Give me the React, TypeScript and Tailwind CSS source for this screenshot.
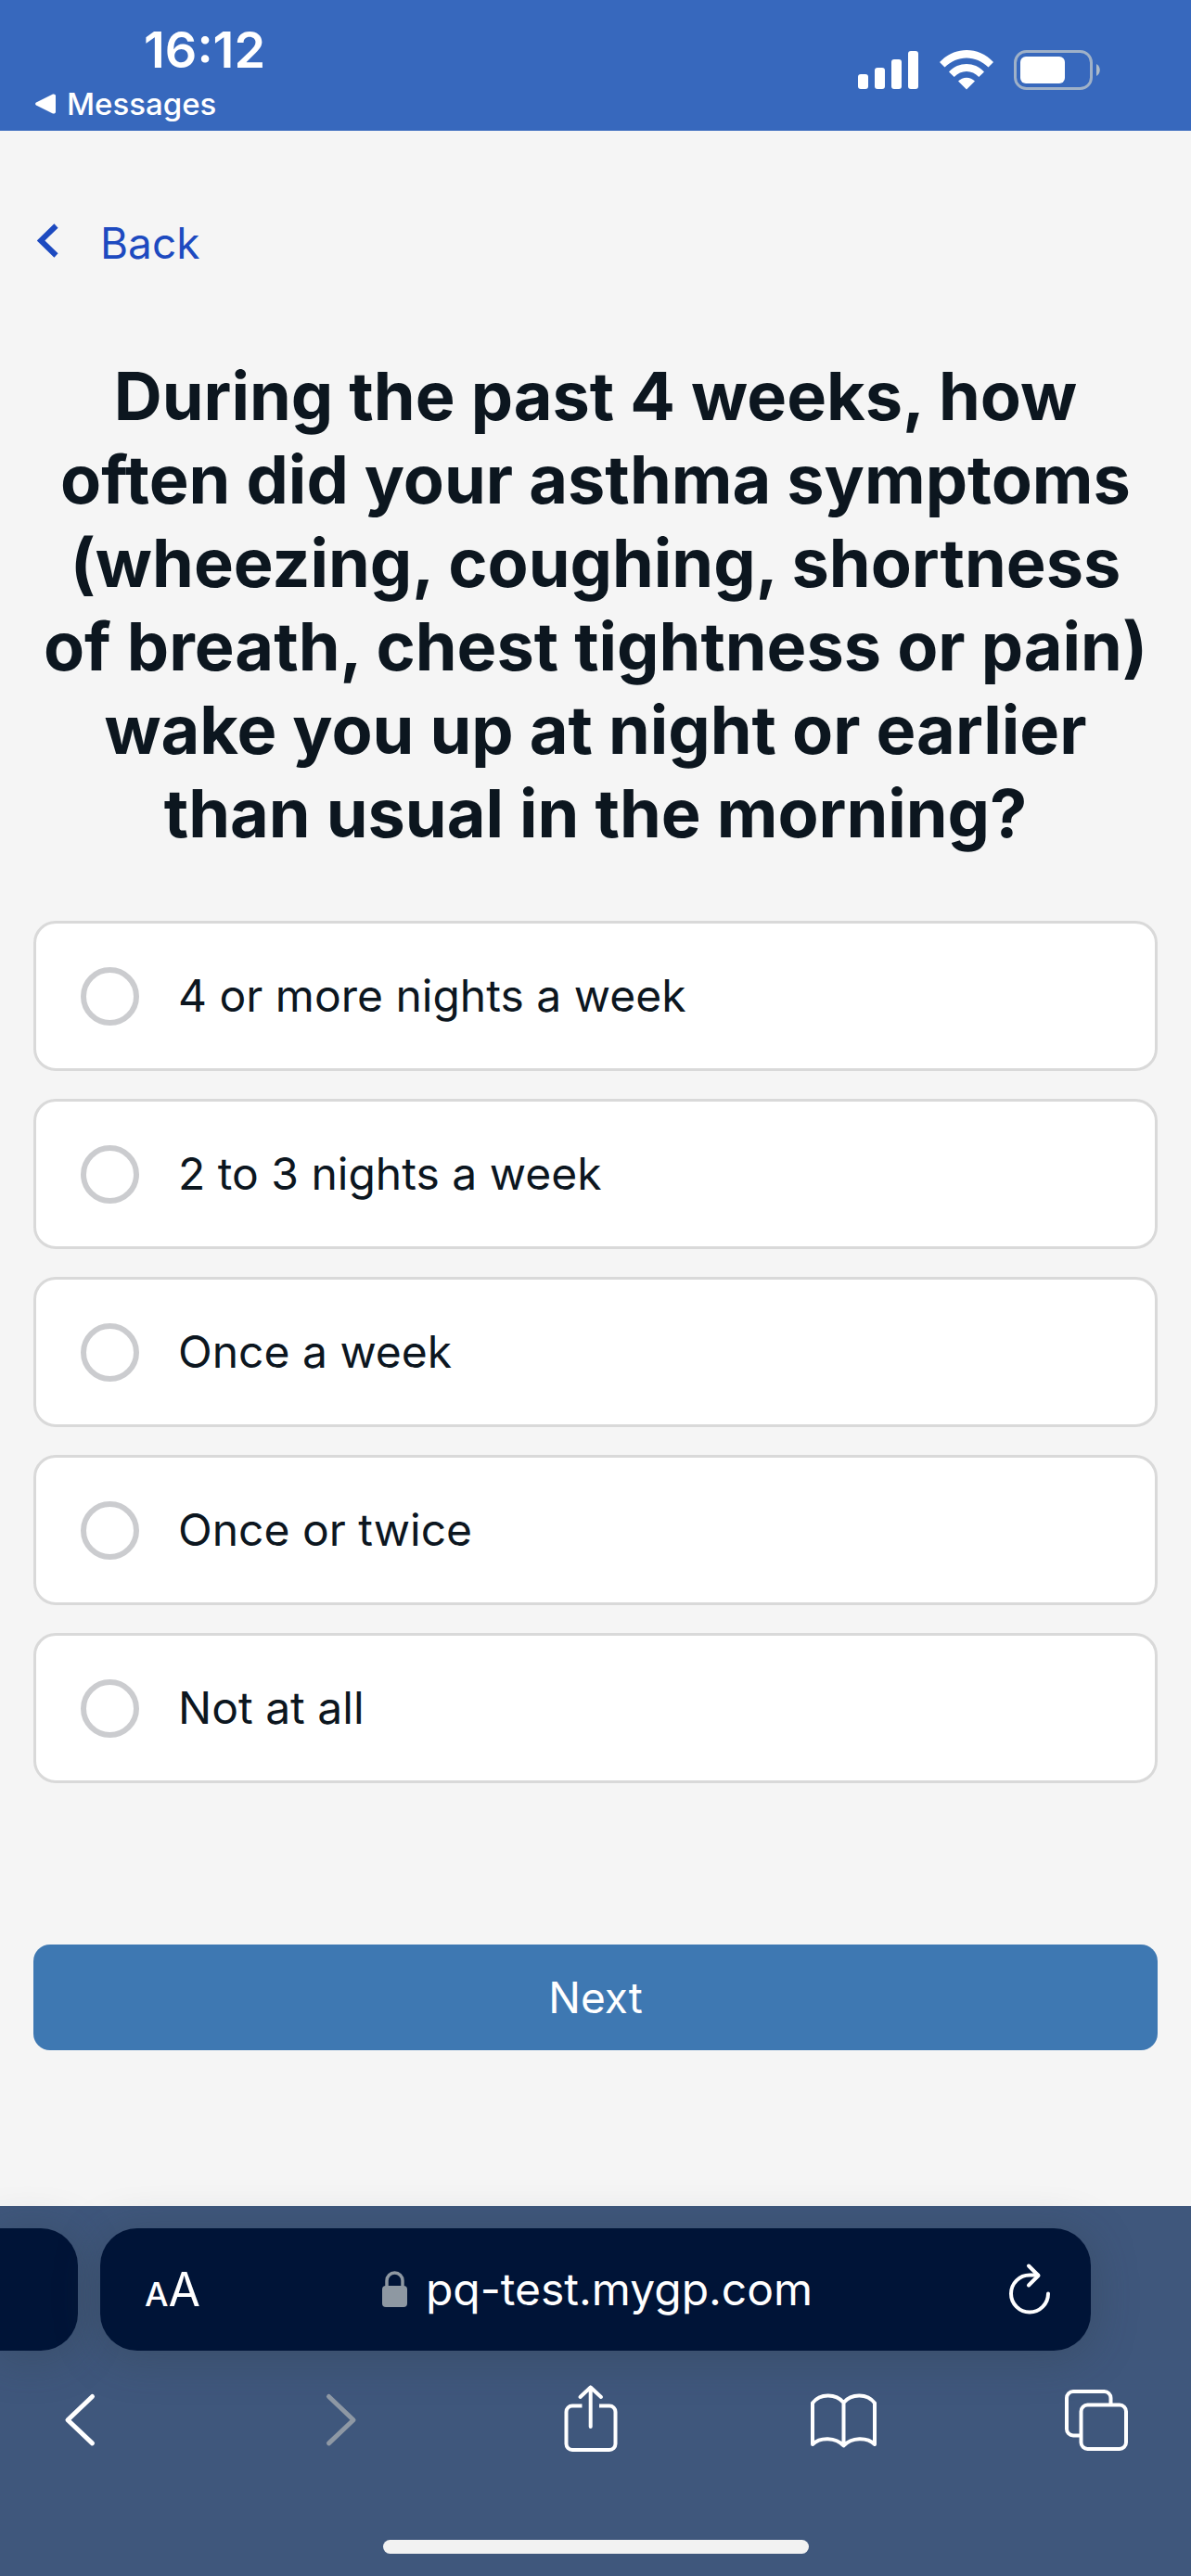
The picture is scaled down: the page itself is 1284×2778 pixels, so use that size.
import { useState } from 'react'

const OPTIONS = [
    '4 or more nights a week',
    '2 to 3 nights a week',
    'Once a week',
    'Once or twice',
    'Not at all',
]

function StatusBar() {
    return (
        <header className="flex justify-between bg-[#3768bd] h-[141px] pl-[38px] pr-[98px] text-white">
            <div className="flex flex-col pt-[26px]">
                <span className="pl-[117px] text-[54px] leading-[56px] font-semibold">16:12</span>
                <a href="#messages" className="flex items-center gap-3 pt-[10px] text-[33px] leading-10 font-medium">
                    <svg width="22" height="22" viewBox="0 0 22 22" fill="currentColor" aria-hidden="true">
                        <path d="M1.500 9.200 19 .6c1.300-.6 3 .3 3 1.600v17.600c0 1.300-1.700 2.200-3 1.600L1.500 12.800C-.3 12-.3 10 1.500 9.200Z" />
                    </svg>
                    Messages
                </a>
            </div>
            <div className="flex items-start pt-[54px]">
                <svg width="66" height="44" viewBox="0 0 66 44" fill="currentColor" aria-hidden="true">
                    <rect x="0" y="26" width="11" height="16" rx="3" />
                    <rect x="18" y="19" width="11" height="23" rx="3" />
                    <rect x="36" y="10" width="11" height="32" rx="3" />
                    <rect x="54" y="1" width="11" height="41" rx="3" />
                </svg>
                <svg className="ml-[22px]" width="58" height="44" viewBox="0 0 58 44" fill="currentColor" aria-hidden="true">
                    <path d="M0 13C16-4.300 42-4.300 58 13l-5.500 5.500C39 5 19 5 5.500 18.500Z" />
                    <path d="M10 23.500c10.500-11.300 27.500-11.300 38 0L42.300 29C35 21 23 21 15.700 29Z" />
                    <path d="M20 33.600c5-5.300 13-5.300 18 0L29 42.500Z" />
                </svg>
                <svg className="ml-[22px]" width="93" height="44" viewBox="0 0 93 44" fill="none" aria-hidden="true">
                    <rect x="1.500" y="1.500" width="82" height="40" rx="12" stroke="#9fb1c8" strokeWidth="3" />
                    <rect x="7" y="7" width="48" height="29" rx="6" fill="#fff" />
                    <path d="M89 15c5 2.500 5 10.500 0 13Z" fill="#adbac8" />
                </svg>
            </div>
        </header>
    )
}

function Toolbar() {
    return (
        <nav className="flex justify-between pt-[33px] pl-[59px] pr-[66px] text-white" aria-label="Browser">
            <button type="button" aria-label="Previous page">
                <svg width="72" height="84" viewBox="0 0 72 84" fill="none" stroke="currentColor" strokeWidth="5" strokeLinecap="round" strokeLinejoin="round">
                    <path d="M40.500 16.500 14 41.700l26.500 25.200" />
                </svg>
            </button>
            <button type="button" aria-label="Next page" disabled className="text-[#8e98a4]">
                <svg width="72" height="84" viewBox="0 0 72 84" fill="none" stroke="currentColor" strokeWidth="5" strokeLinecap="round" strokeLinejoin="round">
                    <path d="M23.500 16.500 50 41.700 23.500 66.900" />
                </svg>
            </button>
            <button type="button" aria-label="Share">
                <svg width="72" height="84" viewBox="0 0 72 84" fill="none" stroke="currentColor" strokeWidth="4" strokeLinejoin="round">
                    <path d="M24.500 26.500H14a6.500 6.500 0 0 0-6.500 6.500v34.500A6.500 6.500 0 0 0 14 74h40a6.500 6.500 0 0 0 6.500-6.500V33a6.500 6.500 0 0 0-6.500-6.500H43" />
                    <path strokeLinecap="round" d="M33.700 49V6.500M22.500 17 33.700 6.500 45 17" />
                </svg>
            </button>
            <button type="button" aria-label="Bookmarks">
                <svg width="72" height="84" viewBox="0 0 72 84" fill="none" stroke="currentColor" strokeWidth="4" strokeLinecap="round" strokeLinejoin="round">
                    <path d="M35.500 23C27 13 10 13 2 23.500V68c8-8 25-8 33.500 1.500C44 60 61 60 69 68V23.500C61 13 44 13 35.500 23ZM35.500 23v46" />
                </svg>
            </button>
            <button type="button" aria-label="Tabs">
                <svg width="72" height="84" viewBox="0 0 72 84" fill="none" stroke="currentColor" strokeWidth="4">
                    <path d="M51.500 25v-7a7 7 0 0 0-7-7H11a7 7 0 0 0-7 7v33.500a7 7 0 0 0 7 7h8" />
                    <rect x="19.500" y="25.500" width="48.500" height="47.500" rx="7" />
                </svg>
            </button>
        </nav>
    )
}

function BrowserBar() {
    return (
        <footer className="mt-auto bg-[#3f577c] pt-6 pb-6">
            <div className="flex gap-6 pr-[108px] text-white">
                <div className="w-[84px] h-[132px] rounded-r-[40px] bg-[#001437] shadow-[0_6px_48px_rgba(48,60,70,0.35)]" />
                <div className="flex-1 h-[132px] grid grid-cols-[1fr_auto_1fr] items-center rounded-[40px] bg-[#001437] pl-[48px] pr-11 shadow-[0_6px_48px_rgba(48,60,70,0.35)]">
                    <button type="button" aria-label="Page settings" className="flex items-baseline justify-self-start pt-1">
                        <span className="text-[36px] leading-[60px] font-medium">A</span>
                        <span className="text-[50px] leading-[60px]">A</span>
                    </button>
                    <div className="flex items-center gap-5">
                        <svg width="27" height="40" viewBox="0 0 27 40" aria-hidden="true">
                            <rect x="0" y="16" width="27" height="23" rx="4" fill="#8e98a2" />
                            <path d="M5 18V10.500a8.500 8.500 0 0 1 17 0V18" fill="none" stroke="#8e98a2" strokeWidth="3.500" />
                        </svg>
                        <span className="text-[48px] leading-[60px]">pq-test.mygp.com</span>
                    </div>
                    <button type="button" aria-label="Reload" className="justify-self-end">
                        <svg width="44" height="60" viewBox="0 0 44 60" fill="none" stroke="currentColor" strokeWidth="4" strokeLinecap="round" strokeLinejoin="round">
                            <path d="M42 34.500a20 20 0 1 1-20-20h9" />
                            <path d="m21 4.500 10.500 10.500L21 25.500" />
                        </svg>
                    </button>
                </div>
            </div>
            <Toolbar />
            <div className="mx-auto mt-[87px] h-[15px] w-[459px] rounded-full bg-[#f2f2f2]" />
        </footer>
    )
}

export default function App() {
    const [answer, setAnswer] = useState('')

    return (
        <div className="min-h-screen flex flex-col bg-[#f5f5f5] font-['Inter',sans-serif] text-[#0c161f]">
            <StatusBar />

            <main className="px-9 pt-[91px]">
                <a href="#back" className="flex w-fit items-center gap-11 pl-1 text-[46px] leading-[60px] text-[#1d4ac0]">
                    <svg width="24" height="42" viewBox="0 0 24 42" fill="none" stroke="currentColor" strokeWidth="6" aria-hidden="true">
                        <path d="M20.500 2.500 4 18.500l16.500 16" />
                    </svg>
                    Back
                </a>

                <form onSubmit={(e) => e.preventDefault()}>
                    <h1 id="question" className="mt-[90px] text-center text-[72px] leading-[90px] font-bold">
                        During the past 4 weeks, how often did your asthma symptoms (wheezing, coughing, shortness of breath, chest tightness or pain) wake you up at night or earlier than usual in the morning?
                    </h1>

                    <div role="radiogroup" aria-labelledby="question" className="mt-[71px] flex flex-col gap-[30px]">
                        {OPTIONS.map((option) => (
                            <label
                                key={option}
                                className="flex items-center gap-[42px] h-[162px] rounded-3xl border-3 border-[#d9d9d9] bg-white pl-12 text-[48px] leading-[60px]"
                            >
                                <input
                                    type="radio"
                                    name="answer"
                                    value={option}
                                    checked={answer === option}
                                    onChange={() => setAnswer(option)}
                                    className="size-[63px] shrink-0 appearance-none rounded-full border-6 border-[#cbcccf] bg-white checked:border-[#3e78b2]"
                                />
                                {option}
                            </label>
                        ))}
                    </div>

                    <button
                        type="submit"
                        className="mt-[174px] mb-[168px] w-full h-[114px] rounded-[18px] bg-[#3e78b2] text-[46px] leading-[60px] text-white"
                    >
                        Next
                    </button>
                </form>
            </main>

            <BrowserBar />
        </div>
    )
}
